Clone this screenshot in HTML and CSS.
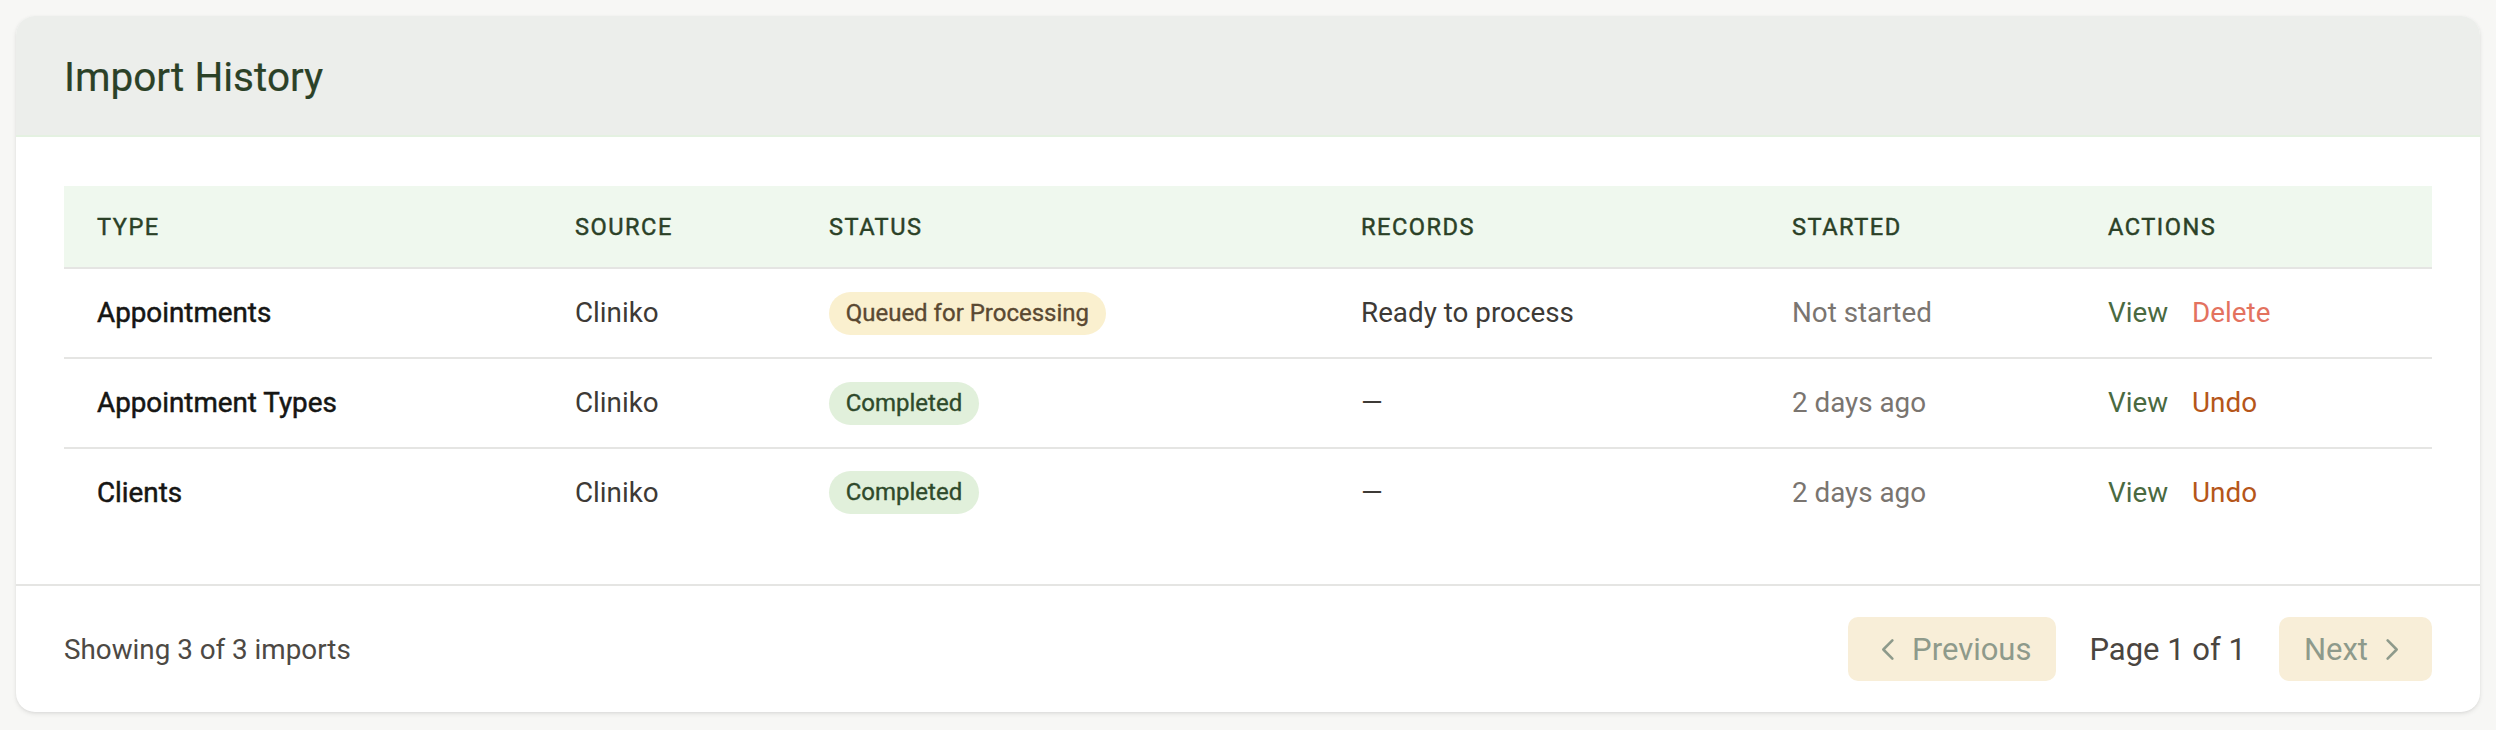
FILE: index.html
```html
<!DOCTYPE html>
<html lang="en">
<head>
<meta charset="utf-8">
<title>Import History</title>
<link rel="stylesheet" href="styles.css">
</head>
<body>
<div class="card">
  <div class="card-header">
    <h2 class="title">Import History</h2>
  </div>
  <div class="card-body">
    <table class="table">
      <colgroup>
        <col class="c-type"><col class="c-source"><col class="c-status"><col class="c-records"><col class="c-started"><col class="c-actions">
      </colgroup>
      <thead>
        <tr>
          <th>Type</th><th>Source</th><th>Status</th><th>Records</th><th>Started</th><th>Actions</th>
        </tr>
      </thead>
      <tbody>
        <tr>
          <td class="type">Appointments</td>
          <td class="muted-dark">Cliniko</td>
          <td><span class="badge badge-queued">Queued for Processing</span></td>
          <td class="muted-dark">Ready to process</td>
          <td class="muted">Not started</td>
          <td><div class="actions"><a class="link view">View</a><a class="link delete">Delete</a></div></td>
        </tr>
        <tr>
          <td class="type">Appointment Types</td>
          <td class="muted-dark">Cliniko</td>
          <td><span class="badge badge-done">Completed</span></td>
          <td class="muted-dark">—</td>
          <td class="muted">2 days ago</td>
          <td><div class="actions"><a class="link view">View</a><a class="link undo">Undo</a></div></td>
        </tr>
        <tr>
          <td class="type">Clients</td>
          <td class="muted-dark">Cliniko</td>
          <td><span class="badge badge-done">Completed</span></td>
          <td class="muted-dark">—</td>
          <td class="muted">2 days ago</td>
          <td><div class="actions"><a class="link view">View</a><a class="link undo">Undo</a></div></td>
        </tr>
      </tbody>
    </table>
  </div>
  <div class="card-footer">
    <span class="showing">Showing 3 of 3 imports</span>
    <div class="pager">
      <button class="pg-btn" disabled>
        <svg class="chev" viewBox="0 0 24 24" fill="none" stroke="currentColor" stroke-width="2" stroke-linecap="round" stroke-linejoin="round"><path d="M15 19l-7-7 7-7"/></svg>
        <span>Previous</span>
      </button>
      <span class="page-info">Page 1 of 1</span>
      <button class="pg-btn" disabled>
        <span>Next</span>
        <svg class="chev" viewBox="0 0 24 24" fill="none" stroke="currentColor" stroke-width="2" stroke-linecap="round" stroke-linejoin="round"><path d="M9 5l7 7-7 7"/></svg>
      </button>
    </div>
  </div>
</div>
</body>
</html>
```

FILE: styles.css
```css
* { box-sizing: border-box; }

html, body {
  margin: 0;
  background: #f7f7f5;
}

body {
  padding: 16px;
  font-family: Roboto, "Liberation Sans", Arial, sans-serif;
  color: #1c1c1a;
}

.card {
  background: #ffffff;
  border-radius: 19px;
  overflow: hidden;
  box-shadow: 0 2px 5px rgba(0, 0, 0, 0.08), 0 1px 3px rgba(0, 0, 0, 0.05);
}

.card-header {
  height: 121px;
  padding: 3px 48px 0;
  display: flex;
  align-items: center;
  background: #eceeeb;
  border-bottom: 2px solid #e4f1e1;
}

.title {
  margin: 0;
  font-size: 40.5px;
  font-weight: 400;
  color: #2b4127;
  line-height: 1.3;
  -webkit-text-stroke: 0.2px currentColor;
}

.card-body {
  padding: 49px 48px 48px;
}

.table {
  width: 100%;
  border-collapse: collapse;
  table-layout: fixed;
}

.c-type { width: 478px; }
.c-source { width: 254px; }
.c-status { width: 532px; }
.c-records { width: 431px; }
.c-started { width: 316px; }
.c-actions { width: 357px; }

.table th {
  height: 82px;
  padding: 0 33px;
  text-align: left;
  font-size: 23.6px;
  font-weight: 400;
  letter-spacing: 1.5px;
  text-transform: uppercase;
  color: #2b4127;
  background: #eff8ee;
  border-bottom: 2px solid #e5e5e3;
  -webkit-text-stroke: 0.45px currentColor;
}

.table td {
  height: 90px;
  padding: 0 33px;
  font-size: 27.8px;
  line-height: 40px;
  vertical-align: middle;
  border-bottom: 2px solid #e5e5e3;
  white-space: nowrap;
}

.table tbody tr:last-child td {
  border-bottom: none;
  height: 88px;
}

.type {
  font-weight: 400;
  color: #161614;
  -webkit-text-stroke: 0.5px currentColor;
}

.muted-dark { color: #3d3a36; }
.muted { color: #7a7570; }

.badge {
  display: inline-block;
  padding: 5px 16.7px;
  line-height: 33px;
  border-radius: 999px;
  font-size: 24px;
  font-weight: 400;
  vertical-align: middle;
  -webkit-text-stroke: 0.35px currentColor;
}

.badge-queued {
  background: #faf0cf;
  color: #5a4932;
}

.badge-done {
  background: #e1f0db;
  color: #2f4a2b;
}

.actions {
  display: flex;
  gap: 24px;
}

.link {
  cursor: pointer;
  text-decoration: none;
}

.view { color: #4a6a41; }
.delete { color: #e3725f; }
.undo { color: #b5561a; }

.card-footer {
  border-top: 2px solid #e5e5e3;
  padding: 31px 48px;
  display: flex;
  justify-content: space-between;
  align-items: center;
}

.showing {
  font-size: 27.8px;
  color: #4d4944;
}

.pager {
  display: flex;
  align-items: center;
  gap: 33px;
}

.page-info {
  font-size: 31px;
  color: #4a4540;
}

.pg-btn {
  height: 64px;
  padding: 0 25px;
  display: inline-flex;
  align-items: center;
  gap: 8px;
  border: none;
  border-radius: 10px;
  background: #f8eed8;
  color: #8e9a8b;
  font-family: inherit;
  font-size: 31px;
}

.chev {
  width: 31px;
  height: 31px;
  flex: none;
}
```
